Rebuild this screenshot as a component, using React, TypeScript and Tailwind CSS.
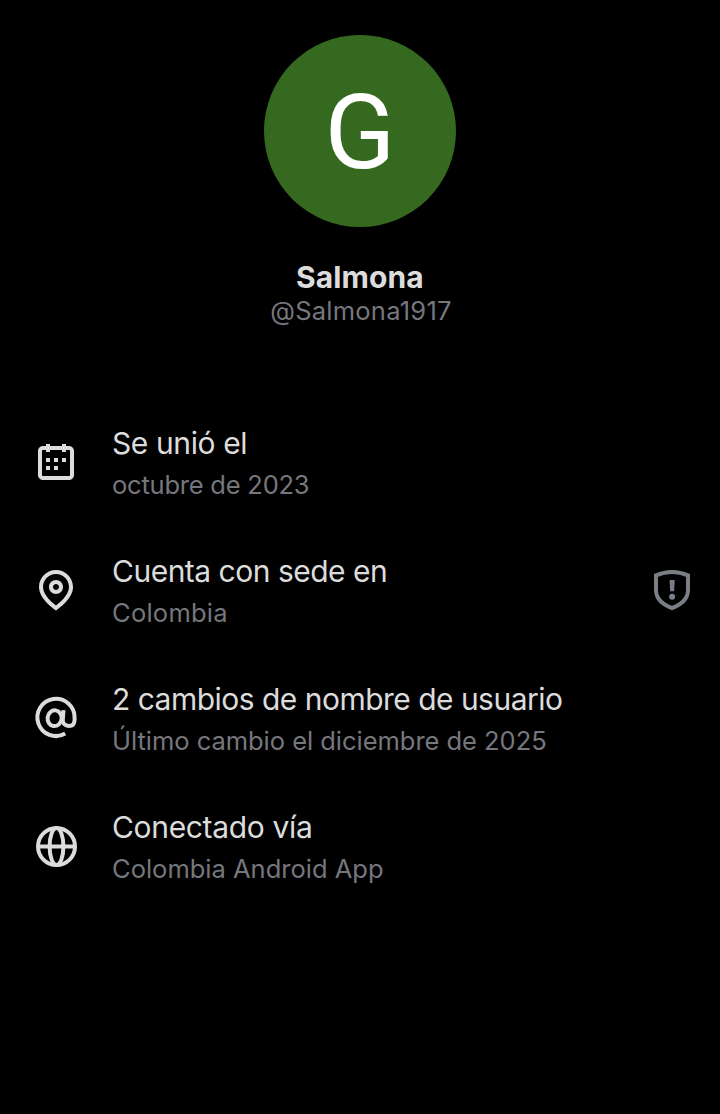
import type { ReactNode } from "react";

function CalendarIcon() {
  return (
    <svg viewBox="0 0 24 24" className="size-12 shrink-0 text-[#dcdcdc]" fill="currentColor">
      <path d="M7 4V3h2v1h6V3h2v1h1.5C19.89 4 21 5.12 21 6.5v12c0 1.38-1.11 2.5-2.5 2.5h-13C4.12 21 3 19.88 3 18.5v-12C3 5.12 4.12 4 5.5 4H7zm0 2H5.5c-.27 0-.5.22-.5.5v12c0 .28.23.5.5.5h13c.28 0 .5-.22.5-.5v-12c0-.28-.22-.5-.5-.5H17v1h-2V6H9v1H7V6zm0 6h2v-2H7v2zm0 4h2v-2H7v2zm4-4h2v-2h-2v2zm0 4h2v-2h-2v2zm4-4h2v-2h-2v2z" />
    </svg>
  );
}

function PinIcon() {
  return (
    <svg viewBox="0 0 24 24" className="size-12 shrink-0 text-[#dcdcdc]" fill="currentColor">
      <path d="M12 7c-1.93 0-3.5 1.57-3.5 3.5S10.07 14 12 14s3.5-1.57 3.5-3.5S13.93 7 12 7zm0 5c-.827 0-1.5-.673-1.5-1.5S11.173 9 12 9s1.5.673 1.5 1.5S12.827 12 12 12zm0-10c-4.687 0-8.5 3.813-8.5 8.5 0 5.967 7.621 11.116 7.945 11.332l.555.37.555-.37c.324-.216 7.945-5.365 7.945-11.332C20.5 5.813 16.687 2 12 2zm0 17.77c-1.665-1.241-6.5-5.196-6.5-9.27C5.5 6.916 8.416 4 12 4s6.5 2.916 6.5 6.5c0 4.073-4.835 8.028-6.5 9.27z" />
    </svg>
  );
}

function AtIcon() {
  return (
    <svg viewBox="0 0 48 48" className="size-12 shrink-0 text-[#dcdcdc]" fill="none" stroke="currentColor" strokeWidth="4">
      <path d="M33.2 39.6A18.6 18.6 0 1 1 42.6 24v1.4c0 4.200-2 6.500-5.600 6.500-4.200 0-6.500-2.500-6.200-6.400L31.500 16.200" />
      <ellipse cx="22.6" cy="24.2" rx="7" ry="7.900" transform="rotate(8 22.6 24.2)" />
    </svg>
  );
}

function GlobeIcon() {
  return (
    <svg viewBox="0 0 48 48" className="size-12 shrink-0 text-[#dcdcdc]" fill="none" stroke="currentColor" strokeWidth="4">
      <circle cx="24.5" cy="24.5" r="18.5" />
      <ellipse cx="24.5" cy="24.5" rx="6.9" ry="18.5" />
      <path d="M6 24.5h37" />
    </svg>
  );
}

function ShieldIcon() {
  return (
    <svg viewBox="0 0 48 48" className="size-12 shrink-0 text-[#7a7f86]">
      <path
        d="M24 6c5.5 0 11 1.2 16 3.4V24c0 9-6.5 14.5-16 18C14.5 38.5 8 33 8 24V9.4C13 7.2 18.5 6 24 6z"
        fill="none"
        stroke="currentColor"
        strokeWidth="4"
      />
      <path d="M21.6 14h5.1l-.6 11.2h-3.9z" fill="currentColor" />
      <circle cx="24.1" cy="30.8" r="3" fill="currentColor" />
    </svg>
  );
}

type RowProps = {
  icon: ReactNode;
  title: string;
  detail: string;
  titleClass: string;
  detailClass: string;
  trailing?: ReactNode;
};

function InfoRow({ icon, title, detail, titleClass, detailClass, trailing }: RowProps) {
  return (
    <li className="flex h-32 items-center gap-8 pr-6 pl-8">
      {icon}
      <div className="min-w-0 flex-1 pt-1 whitespace-nowrap">
        <p className={`text-[30px] leading-10 text-[#dcdcdc] ${titleClass}`}>{title}</p>
        <p className={`mt-0.5 text-[25.5px] leading-10 text-[#76777d] ${detailClass}`}>{detail}</p>
      </div>
      {trailing}
    </li>
  );
}

export default function App() {
  return (
    <main className="flex h-[1114px] w-[720px] flex-col bg-black pt-[35px] font-['Inter','Liberation_Sans',sans-serif]">
      <header className="flex flex-col items-center">
        <div className="flex size-48 items-center justify-center rounded-full bg-[#34691f] pt-1 font-['Roboto',sans-serif] text-[104px] leading-none text-white">
          G
        </div>
        <h1 className="mt-8 text-[30px] leading-9 font-bold tracking-[0.1px] text-[#dcdcdc]">Salmona</h1>
        <p className="pl-0.5 text-[25.5px] leading-8 tracking-[0.25px] text-[#76777d]">@Salmona1917</p>
      </header>
      <ul className="mt-[71px]">
        <InfoRow
          icon={<CalendarIcon />}
          title="Se unió el"
          detail="octubre de 2023"
          titleClass="tracking-[-0.4px]"
          detailClass="tracking-[-0.22px]"
        />
        <InfoRow
          icon={<PinIcon />}
          title="Cuenta con sede en"
          detail="Colombia"
          titleClass="tracking-[-0.5px]"
          detailClass="tracking-[0.25px]"
          trailing={<ShieldIcon />}
        />
        <InfoRow
          icon={<AtIcon />}
          title="2 cambios de nombre de usuario"
          detail="Último cambio el diciembre de 2025"
          titleClass="tracking-[-0.52px]"
          detailClass="tracking-[-0.03px]"
        />
        <InfoRow
          icon={<GlobeIcon />}
          title="Conectado vía"
          detail="Colombia Android App"
          titleClass="tracking-[-0.33px]"
          detailClass="tracking-[0px]"
        />
      </ul>
    </main>
  );
}
